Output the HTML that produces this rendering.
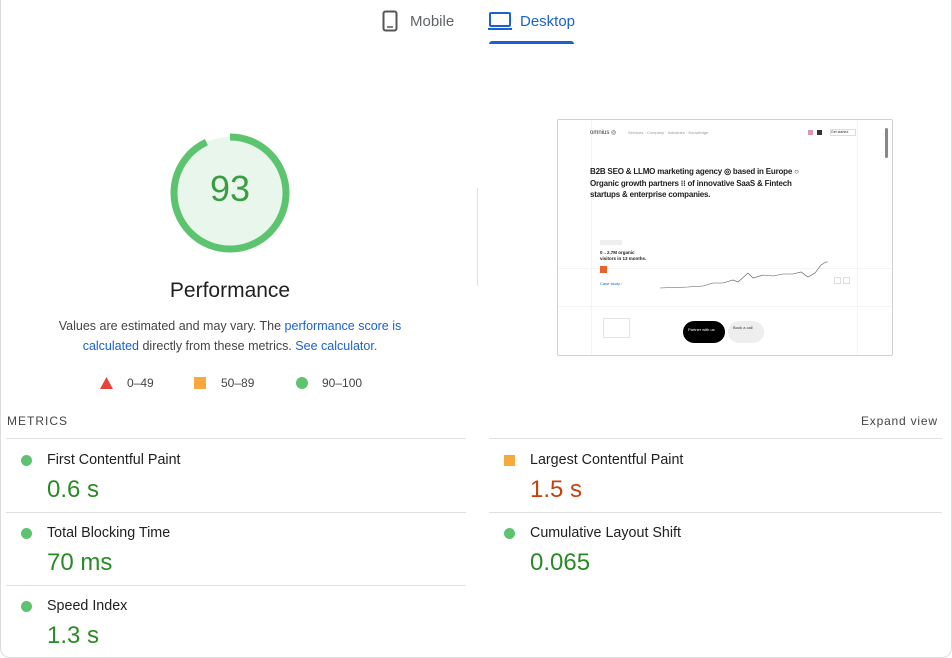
<!DOCTYPE html>
<html><head><meta charset="utf-8"><style>
*{margin:0;padding:0;box-sizing:border-box}
body{width:952px;height:658px;background:#fff;font-family:"Liberation Sans",Arial,sans-serif;position:relative;overflow:hidden;color:#212121}
.frame{position:absolute;left:0;top:-10px;width:952px;height:668px;border:1px solid #dadce0;border-radius:10px}
.abs{position:absolute}
.tab{font-size:15px;color:#5f6368}
.mlabel{font-size:14.3px;color:#212121}
.mval{font-size:24px;color:#2a8a25}
.dot{width:11px;height:11px;border-radius:50%;background:#5dc36f}
.hr{height:1px;background:#e0e0e0}
a{color:#1a62d2;text-decoration:none}
</style></head><body>
<div class="frame"></div>
<svg class="abs" style="left:382px;top:10px" width="16" height="22" viewBox="0 0 16 22"><rect x="1.5" y="1.5" width="13" height="19" rx="2" fill="none" stroke="#555" stroke-width="2"/><line x1="5" y1="17" x2="11" y2="17" stroke="#555" stroke-width="1.5"/></svg>
<div class="abs tab" style="left:410px;top:13px">Mobile</div>
<svg class="abs" style="left:488px;top:12px" width="24" height="18" viewBox="0 0 24 18"><rect x="2" y="1" width="20" height="13" rx="1" fill="none" stroke="#1a62d2" stroke-width="2"/><line x1="0" y1="17" x2="24" y2="17" stroke="#1a62d2" stroke-width="2"/></svg>
<div class="abs tab" style="left:520px;top:13px;color:#1a62d2">Desktop</div>
<div class="abs" style="left:489px;top:41px;width:85px;height:3px;background:#1a62d2;border-radius:3px 3px 0 0"></div>
<svg class="abs" style="left:168px;top:131px" width="124" height="124" viewBox="0 0 124 124">
<circle cx="62" cy="62" r="56" fill="#e9f6ec"/>
<circle cx="62" cy="62" r="56" fill="none" stroke="#5cc46f" stroke-width="7" stroke-dasharray="327.2 351.9" transform="rotate(-90 62 62)"/>
</svg>
<div class="abs" style="left:168px;top:168px;width:124px;text-align:center;font-size:36px;color:#3c9c45">93</div>
<div class="abs" style="left:130px;top:279px;width:200px;text-align:center;font-size:21px;color:#212121">Performance</div>
<div class="abs" style="left:40px;top:316px;width:380px;text-align:center;font-size:12.5px;line-height:20px;color:#444">Values are estimated and may vary. The <a>performance score is calculated</a> directly from these metrics. <a>See calculator.</a></div>
<svg class="abs" style="left:100px;top:377px" width="13" height="12"><polygon points="6.5,0 13,12 0,12" fill="#e5443b"/></svg>
<div class="abs" style="left:127px;top:376px;font-size:12px;color:#444">0–49</div>
<div class="abs" style="left:194px;top:377px;width:12px;height:12px;background:#f5a93f"></div>
<div class="abs" style="left:221px;top:376px;font-size:12px;color:#444">50–89</div>
<div class="abs dot" style="left:296px;top:377px;width:12px;height:12px"></div>
<div class="abs" style="left:322px;top:376px;font-size:12px;color:#444">90–100</div>
<div class="abs" style="left:477px;top:188px;width:1px;height:98px;background:#e0e0e0"></div>
<div class="abs" style="left:557px;top:119px;width:336px;height:237px;border:1px solid #d0d0d0;border-radius:2px;background:#fff;overflow:hidden;font-size:6px;color:#777">
 <div class="abs" style="left:33px;top:0;width:1px;height:237px;background:#f4f4f4"></div>
 <div class="abs" style="left:299px;top:0;width:1px;height:237px;background:#f4f4f4"></div>
 <div class="abs" style="left:0;top:148px;width:336px;height:1px;background:#f4f4f4"></div>
 <div class="abs" style="left:0;top:186px;width:336px;height:1px;background:#f4f4f4"></div>
 <div class="abs" style="left:32px;top:9px;font-size:6px;color:#333">omnius ◎</div>
 <div class="abs" style="left:70px;top:10px;font-size:4px;color:#999">Services · Company · Industries · Knowledge</div>
 <div class="abs" style="left:250px;top:10px;width:5px;height:5px;background:#d9a;"></div>
 <div class="abs" style="left:259px;top:10px;width:5px;height:5px;background:#333"></div>
 <div class="abs" style="left:272px;top:9px;width:26px;height:7px;border:1px solid #ddd;font-size:3.5px;color:#333">Get started</div>
 <div class="abs" style="left:327px;top:8px;width:3px;height:30px;background:#888;border-radius:2px"></div>
 <div class="abs" style="left:32px;top:46px;width:210px;font-size:8px;line-height:11.5px;color:#222;font-weight:bold;letter-spacing:-0.2px">B2B SEO &amp; LLMO marketing agency ◎ based in Europe ○ Organic growth partners ⁝⁝ of innovative SaaS &amp; Fintech startups &amp; enterprise companies.</div>
 <div class="abs" style="left:42px;top:120px;width:22px;height:5px;background:#eee"></div>
 <div class="abs" style="left:42px;top:130px;font-size:4.5px;line-height:6px;color:#222;font-weight:bold">0→2.7M organic<br>visitors in 13 months.</div>
 <div class="abs" style="left:42px;top:146px;width:7px;height:7px;background:#e8622c"></div>
 <div class="abs" style="left:42px;top:161px;font-size:4px;color:#1a62d2">Case study ›</div>
 <svg class="abs" style="left:100px;top:115px" width="170" height="55"><path d="M2,53 L30,52 L45,51 L55,48 L65,48 L75,45 L80,47 L90,38 L95,43 L105,40 L115,41 L125,39 L135,39 L143,37 L150,42 L157,38 L163,30 L168,27 L175,27 L180,15 L184,18 L188,8 L190,5" fill="none" stroke="#555" stroke-width="0.6"/></svg>
 <div class="abs" style="left:276px;top:157px;width:7px;height:7px;border:1px solid #ddd"></div>
 <div class="abs" style="left:285px;top:157px;width:7px;height:7px;border:1px solid #ddd"></div>
 <div class="abs" style="left:125px;top:201px;width:42px;height:22px;border-radius:11px;background:#000;color:#fff;font-size:4px;padding:6px 5px">Partner with us</div>
 <div class="abs" style="left:170px;top:201px;width:36px;height:22px;border-radius:11px;background:#eee;color:#333;font-size:4px;padding:4px 5px">Book a call</div>
 <div class="abs" style="left:45px;top:198px;width:27px;height:20px;border:1px solid #e4e4e4"></div>
</div>
<div class="abs" style="left:7px;top:414px;font-size:12px;letter-spacing:1px;color:#444">METRICS</div>
<div class="abs" style="left:861px;top:414px;font-size:12px;letter-spacing:.8px;color:#444">Expand view</div>
<div class="abs hr" style="left:6px;top:438px;width:460px"></div>
<div class="abs hr" style="left:489px;top:438px;width:453px"></div>
<div class="abs dot" style="left:21px;top:455px"></div>
<div class="abs mlabel" style="left:47px;top:452px">First Contentful Paint</div>
<div class="abs mval" style="left:47px;top:476px">0.6 s</div>
<div class="abs hr" style="left:6px;top:512px;width:460px"></div>
<div class="abs dot" style="left:21px;top:528px"></div>
<div class="abs mlabel" style="left:47px;top:525px">Total Blocking Time</div>
<div class="abs mval" style="left:47px;top:549px">70 ms</div>
<div class="abs hr" style="left:6px;top:585px;width:460px"></div>
<div class="abs dot" style="left:21px;top:601px"></div>
<div class="abs mlabel" style="left:47px;top:598px">Speed Index</div>
<div class="abs mval" style="left:47px;top:622px">1.3 s</div>
<div class="abs" style="left:504px;top:455px;width:11px;height:11px;background:#f5a93f"></div>
<div class="abs mlabel" style="left:530px;top:452px">Largest Contentful Paint</div>
<div class="abs mval" style="left:530px;top:476px;color:#c2410c">1.5 s</div>
<div class="abs hr" style="left:489px;top:512px;width:453px"></div>
<div class="abs dot" style="left:504px;top:528px"></div>
<div class="abs mlabel" style="left:530px;top:525px">Cumulative Layout Shift</div>
<div class="abs mval" style="left:530px;top:549px">0.065</div>
</body></html>
